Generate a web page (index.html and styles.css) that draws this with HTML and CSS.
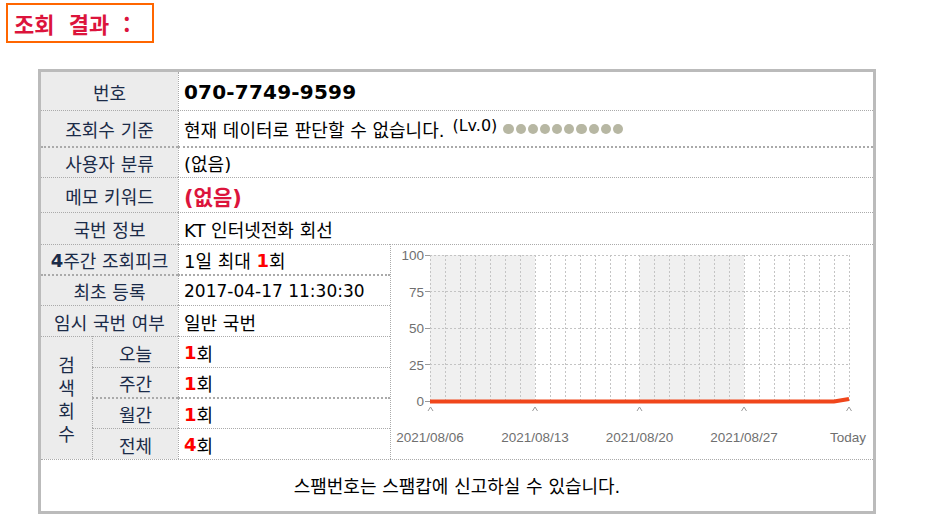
FILE: index.html
```html
<!DOCTYPE html>
<html lang="ko">
<head>
<meta charset="utf-8">
<title>조회 결과</title>
<link rel="stylesheet" href="styles.css">
</head>
<body>
<div class="title-wrap"><h2 class="title">조회 결과 :</h2></div>
<div class="result">
  <div class="grid">
    <div class="chart">
      <svg width="482" height="214" viewBox="391 245 482 214" xmlns="http://www.w3.org/2000/svg">
        <rect x="430" y="255" width="105" height="146.5" fill="#f0f0f0"/>
        <rect x="639.5" y="255" width="104.5" height="146.5" fill="#f0f0f0"/>
        <path d="M430.5 255V401M445.5 255V401M460.5 255V401M475.5 255V401M490.5 255V401M505.5 255V401M520.5 255V401M535.5 255V401M550.5 255V401M565.5 255V401M580.5 255V401M595.5 255V401M610.5 255V401M625.5 255V401M639.5 255V401M654.5 255V401M669.5 255V401M684.5 255V401M699.5 255V401M714.5 255V401M729.5 255V401M744.5 255V401M759.5 255V401M774.5 255V401M789.5 255V401M804.5 255V401M819.5 255V401M834.5 255V401M849.5 255V401" stroke="#c4c4c4" stroke-width="1" stroke-dasharray="2 2" fill="none"/>
        <path d="M430 255.5H850M430 291.5H850M430 328.5H850M430 364.5H850" stroke="#c4c4c4" stroke-width="1" stroke-dasharray="2 2" fill="none"/>
        <path d="M425 255.5H430M425 291.5H430M425 328.5H430M425 364.5H430M425 401.5H430" stroke="#999" stroke-width="1"/>
        <g class="ylab" text-anchor="end">
          <text x="424" y="260">100</text>
          <text x="424" y="296.5">75</text>
          <text x="424" y="333">50</text>
          <text x="424" y="369.5">25</text>
          <text x="424" y="406">0</text>
        </g>
        <path d="M430 401.5H834L849 399" stroke="#f0461b" stroke-width="4" fill="none"/>
        <path d="M428 411L430.5 407L433 411M532.5 411L535 407L537.5 411M637 411L639.5 407L642 411M741.5 411L744 407L746.5 411M846.5 411L849 407L851.5 411" stroke="#999" stroke-width="1" fill="none"/>
        <g class="xlab" text-anchor="middle">
          <text x="430" y="442">2021/08/06</text>
          <text x="535" y="442">2021/08/13</text>
          <text x="639.5" y="442">2021/08/20</text>
          <text x="744" y="442">2021/08/27</text>
          <text x="848" y="442">Today</text>
        </g>
      </svg>
    </div>
    <div class="search">검<br>색<br>회<br>수</div>

    <div class="lbl wide">번호</div>
    <div class="val full phone">070-7749-9599</div>

    <div class="lbl wide bt">조회수 기준</div>
    <div class="val full bt">현재 데이터로 판단할 수 없습니다.<span class="lv">(Lv.0)</span><span class="dots"><i></i><i></i><i></i><i></i><i></i><i></i><i></i><i></i><i></i><i></i></span></div>

    <div class="lbl wide bt2">사용자 분류</div>
    <div class="val full bt2">(없음)</div>

    <div class="lbl wide bt">메모 키워드</div>
    <div class="val full bt memo">(없음)</div>

    <div class="lbl wide bt">국번 정보</div>
    <div class="val full bt">KT 인터넷전화 회선</div>

    <div class="lbl wide bt"><b>4</b>주간 조회피크</div>
    <div class="val bt">1일 최대&nbsp;<em>1</em>회</div>

    <div class="lbl wide bt2">최초 등록</div>
    <div class="val bt2 date">2017-04-17 11:30:30</div>

    <div class="lbl wide bt">임시 국번 여부</div>
    <div class="val bt">일반 국번</div>

    <div class="lbl sub bt">오늘</div>
    <div class="val bt"><em>1</em>회</div>

    <div class="lbl sub bt">주간</div>
    <div class="val bt"><em>1</em>회</div>

    <div class="lbl sub bt2">월간</div>
    <div class="val bt2"><em>1</em>회</div>

    <div class="lbl sub bt">전체</div>
    <div class="val bt"><em>4</em>회</div>

    <div class="foot bt">스팸번호는 스팸캅에 신고하실 수 있습니다.</div>
  </div>
</div>
</body>
</html>
```

FILE: styles.css
```css
* { box-sizing: border-box; }
body {
  margin: 0;
  background: #fff;
  font-family: "DejaVu Sans", "Noto Sans CJK KR", sans-serif;
  font-size: 18px;
  color: #000;
}
.title-wrap {
  padding: 3px 0 0 6px;
}
.title {
  display: inline-block;
  margin: 0;
  height: 40px;
  line-height: 36px;
  border: 2px solid #ff6600;
  padding: 0 22px 0 6px;
  font-family: "Noto Sans CJK KR", sans-serif;
  font-size: 22px;
  font-weight: bold;
  word-spacing: 8px;
  color: #dc143c;
}
.result {
  margin: 26px 0 0 38px;
  width: 838px;
  border: 3px solid #bbbbbb;
}
.grid {
  display: grid;
  grid-template-columns: 51px 86px 212px 483px;
  grid-template-rows: 38px 36px 31px 35px 32px 30px 31px 31px 31px 30px 31px 31px 52px;
}
.lbl {
  background: #ececec;
  color: #1b2b48;
  display: flex;
  align-items: center;
  justify-content: center;
  padding-top: 1px;
  white-space: nowrap;
}
.lbl b { font-weight: bold; }
.wide { grid-column: span 2; }
.sub { border-left: 1px dotted #aaa; }
.val {
  border-left: 1px dotted #aaa;
  display: flex;
  align-items: center;
  padding-left: 5px;
  padding-top: 1px;
  white-space: nowrap;
}
.full { grid-column: span 2; }
.bt { border-top: 1px dotted #aaa; }
.bt2 { border-top: 2px dotted #aaa; }
.date { font-size: 17px; }
.phone {
  font-size: 20px;
  font-weight: bold;
  letter-spacing: 0.2px;
}
.memo {
  font-size: 21px;
  font-weight: bold;
  color: #dc143c;
}
em {
  font-style: normal;
  font-weight: bold;
  color: #ff0000;
}
.lv {
  font-size: 16px;
  margin-left: 8px;
  position: relative;
  top: -4px;
}
.dots {
  display: inline-flex;
  gap: 2px;
  margin-left: 6px;
}
.dots i {
  display: block;
  width: 10.2px;
  height: 10.2px;
  border-radius: 50%;
  background: #b7b7a3;
}
.chart {
  grid-column: 4;
  grid-row: 6 / 13;
  border-left: 1px dotted #aaa;
  border-top: 1px dotted #aaa;
  background: #fff;
}
.chart svg { display: block; }
.ylab, .xlab {
  font-family: "Liberation Sans", Arial, sans-serif;
  font-size: 13.5px;
  fill: #6f6f6f;
}
.search {
  grid-column: 1;
  grid-row: 9 / 13;
  border-top: 1px dotted #aaa;
  background: #ececec;
  color: #1b2b48;
  display: flex;
  align-items: center;
  justify-content: center;
  text-align: center;
  line-height: 23px;
  padding-top: 3px;
}
.foot {
  grid-column: 1 / 5;
  display: flex;
  align-items: center;
  justify-content: center;
  padding-bottom: 2px;
}
```
